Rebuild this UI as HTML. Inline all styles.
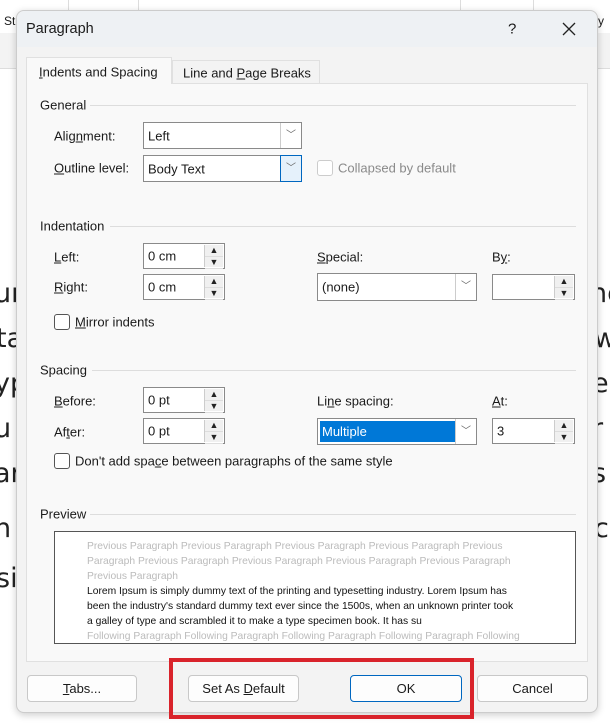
<!DOCTYPE html><html><head><style>
body{margin:0;width:610px;height:726px;position:relative;overflow:hidden;background:#fff;font-family:"Liberation Sans",sans-serif;font-size:13px;color:#1a1a1a}
.a{position:absolute}
.big{position:absolute;font-size:27px;color:#222;font-family:"DejaVu Sans",sans-serif}
.lbl{position:absolute;transform:translateY(-50%);white-space:nowrap}
.box{position:absolute;background:#fff;border:1px solid #8a8a8a;box-sizing:border-box}
.dd{position:absolute;top:0;right:0;bottom:0;width:20px;border-left:1px solid #ccc;background:#fff;font-size:10px;color:#666;text-align:center}
.sp{position:absolute;top:1px;right:1px;bottom:1px;width:18px;border-left:1px solid #ccc;background:#f0f0f0}
.sp i{display:block;height:50%;font-style:normal;font-size:9px;text-align:center;line-height:11px;color:#222;border-bottom:1px solid #ddd}
.v{position:absolute;left:4px;top:50%;transform:translateY(-50%)}
.cb{position:absolute;width:14px;height:14px;border:1px solid #555;border-radius:3px;background:#fff}
.grp{position:absolute;height:1px;background:#ddd}
.btn{position:absolute;height:27px;border:1px solid #c8c8c8;border-radius:4px;background:#fdfdfd;box-sizing:border-box;text-align:center;line-height:25px;font-size:13px}
.pv{position:absolute;left:87px;font-family:"Liberation Sans",sans-serif;font-size:10.3px;white-space:nowrap}
</style></head><body>
<div class="a" style="left:0;top:0;width:610px;height:33px;background:#fff"></div>
<div class="a" style="left:68px;top:0;width:1px;height:33px;background:#ddd"></div>
<div class="a" style="left:138px;top:0;width:1px;height:33px;background:#ddd"></div>
<div class="a" style="left:460px;top:0;width:1px;height:33px;background:#ddd"></div>
<div class="a" style="left:533px;top:0;width:1px;height:33px;background:#ddd"></div>
<div class="a" style="left:0;top:33px;width:610px;height:35px;background:#f3f3f3;border-bottom:1px solid #ddd"></div>
<div class="a" style="left:4px;top:14px;font-size:12px">St</div>
<div class="a" style="left:598px;top:14px;font-size:12px">y</div>
<div class="big" style="left:-6px;top:278px">ur</div><div class="big" style="left:590px;top:278px">nc</div>
<div class="big" style="left:-4px;top:323px">ta</div><div class="big" style="left:594px;top:323px">w</div>
<div class="big" style="left:-6px;top:368px">yp</div><div class="big" style="left:592px;top:368px">e</div>
<div class="big" style="left:-6px;top:413px">u</div><div class="big" style="left:592px;top:413px">r</div>
<div class="big" style="left:-6px;top:458px">ar</div><div class="big" style="left:592px;top:458px">s</div>
<div class="big" style="left:-6px;top:513px">n</div><div class="big" style="left:594px;top:513px">c</div>
<div class="big" style="left:-4px;top:563px">si</div>

<div class="a" style="left:16px;top:10px;width:582px;height:703px;background:#f3f3f3;border:1px solid #ccc;border-radius:8px;box-sizing:border-box;box-shadow:0 2px 8px rgba(0,0,0,.2)"></div>
<div class="a" style="left:17px;top:11px;width:580px;height:36px;background:#eef1f4;border-radius:8px 8px 0 0"></div>
<div class="lbl" style="left:26px;top:29px;font-size:14.5px">Paragraph</div>
<div class="lbl" style="left:508px;top:29px;font-size:15px">?</div>
<svg class="a" style="left:562px;top:22px" width="14" height="14"><path d="M1 1L13 13M13 1L1 13" stroke="#222" stroke-width="1.3"/></svg>

<div class="a" style="left:26px;top:83px;width:562px;height:579px;background:#f9f9f9;border:1px solid #e0e0e0;box-sizing:border-box"></div>
<div class="a" style="left:26px;top:57px;width:146px;height:27px;background:#f9f9f9;border:1px solid #e0e0e0;border-bottom:none;box-sizing:border-box"></div>
<div class="a" style="left:172px;top:60px;width:148px;height:23px;background:#f3f3f3;border:1px solid #e0e0e0;border-bottom:none;box-sizing:border-box"></div>
<div class="lbl" style="left:39px;top:72px"><u>I</u>ndents and Spacing</div>
<div class="lbl" style="left:183px;top:73px">Line and <u>P</u>age Breaks</div>

<div class="lbl" style="left:40px;top:105px">General</div><div class="grp" style="left:90px;top:105px;width:486px"></div>
<div class="lbl" style="left:54px;top:136px">Alig<u>n</u>ment:</div>
<div class="box" style="left:143px;top:122px;width:159px;height:27px"><span class="v">Left</span><div class="dd" style="line-height:25px">﹀</div></div>
<div class="lbl" style="left:54px;top:168px"><u>O</u>utline level:</div>
<div class="box" style="left:143px;top:155px;width:159px;height:27px"><span class="v">Body Text</span><div class="dd" style="line-height:25px;border:1px solid #0067c0;background:#e5f1fb;top:-1px;bottom:-1px;right:-1px">﹀</div></div>
<div class="cb" style="left:317px;top:160px;border-color:#ccc"></div>
<div class="lbl" style="left:338px;top:168px;color:#8a8a8a">Collapsed by default</div>

<div class="lbl" style="left:40px;top:226px">Indentation</div><div class="grp" style="left:110px;top:226px;width:466px"></div>
<div class="lbl" style="left:54px;top:257px"><u>L</u>eft:</div>
<div class="box" style="left:143px;top:243px;width:82px;height:26px"><span class="v">0 cm</span><div class="sp"><i>▲</i><i>▼</i></div></div>
<div class="lbl" style="left:54px;top:287px"><u>R</u>ight:</div>
<div class="box" style="left:143px;top:274px;width:82px;height:26px"><span class="v">0 cm</span><div class="sp"><i>▲</i><i>▼</i></div></div>
<div class="lbl" style="left:317px;top:257px"><u>S</u>pecial:</div>
<div class="box" style="left:317px;top:273px;width:160px;height:28px"><span class="v">(none)</span><div class="dd" style="line-height:26px">﹀</div></div>
<div class="lbl" style="left:492px;top:257px">B<u>y</u>:</div>
<div class="box" style="left:492px;top:274px;width:83px;height:26px"><div class="sp"><i>▲</i><i>▼</i></div></div>
<div class="cb" style="left:54px;top:314px"></div>
<div class="lbl" style="left:75px;top:322px"><u>M</u>irror indents</div>

<div class="lbl" style="left:40px;top:370px">Spacing</div><div class="grp" style="left:92px;top:370px;width:484px"></div>
<div class="lbl" style="left:54px;top:401px"><u>B</u>efore:</div>
<div class="box" style="left:143px;top:387px;width:82px;height:26px"><span class="v">0 pt</span><div class="sp"><i>▲</i><i>▼</i></div></div>
<div class="lbl" style="left:54px;top:432px">Af<u>t</u>er:</div>
<div class="box" style="left:143px;top:418px;width:82px;height:26px"><span class="v">0 pt</span><div class="sp"><i>▲</i><i>▼</i></div></div>
<div class="lbl" style="left:317px;top:401px">Li<u>n</u>e spacing:</div>
<div class="box" style="left:317px;top:418px;width:160px;height:27px"><div class="a" style="left:2px;top:2px;width:136px;height:21px;background:#0078d7;color:#fff;line-height:21px;padding-left:2px;box-sizing:border-box">Multiple</div><div class="dd" style="line-height:25px">﹀</div></div>
<div class="lbl" style="left:492px;top:401px"><u>A</u>t:</div>
<div class="box" style="left:492px;top:418px;width:83px;height:26px"><span class="v">3</span><div class="sp"><i>▲</i><i>▼</i></div></div>
<div class="cb" style="left:54px;top:453px"></div>
<div class="lbl" style="left:75px;top:461px">Don't add spa<u>c</u>e between paragraphs of the same style</div>

<div class="lbl" style="left:40px;top:514px">Preview</div><div class="grp" style="left:90px;top:514px;width:486px"></div>
<div class="a" style="left:54px;top:531px;width:522px;height:113px;background:#fff;border:1px solid #555;box-sizing:border-box;overflow:hidden"></div>
<div class="pv" style="top:541px;color:#bbb">Previous Paragraph Previous Paragraph Previous Paragraph Previous Paragraph Previous</div>
<div class="pv" style="top:556px;color:#bbb">Paragraph Previous Paragraph Previous Paragraph Previous Paragraph Previous Paragraph</div>
<div class="pv" style="top:571px;color:#bbb">Previous Paragraph</div>
<div class="pv" style="top:586px;color:#111">Lorem Ipsum is simply dummy text of the printing and typesetting industry. Lorem Ipsum has</div>
<div class="pv" style="top:601px;color:#111">been the industry's standard dummy text ever since the 1500s, when an unknown printer took</div>
<div class="pv" style="top:616px;color:#111">a galley of type and scrambled it to make a type specimen book. It has su</div>
<div class="pv" style="top:631px;color:#bbb">Following Paragraph Following Paragraph Following Paragraph Following Paragraph Following</div>

<div class="btn" style="left:27px;top:675px;width:110px"><u>T</u>abs...</div>
<div class="btn" style="left:188px;top:675px;width:111px">Set As <u>D</u>efault</div>
<div class="btn" style="left:350px;top:675px;width:112px;border-color:#0067c0">OK</div>
<div class="btn" style="left:477px;top:675px;width:111px">Cancel</div>
<div class="a" style="left:169px;top:658px;width:305px;height:61px;border:4px solid #d9232b;box-sizing:border-box"></div>
</body></html>
